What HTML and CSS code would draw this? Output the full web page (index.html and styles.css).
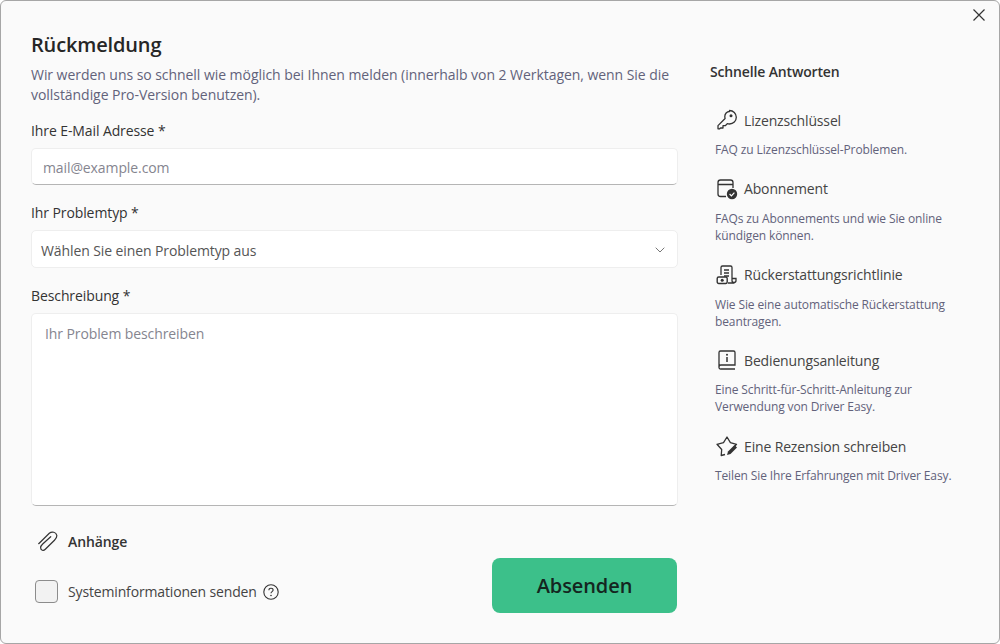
FILE: index.html
```html
<!DOCTYPE html>
<html lang="de">
<head>
    <meta charset="UTF-8">
    <meta name="viewport" content="width=device-width, initial-scale=1.0">
    <title>Rückmeldung</title>
    <link rel="stylesheet" href="styles.css">
</head>
<body>
    <div class="window">
        <button class="close" aria-label="Schließen">
            <svg width="14" height="14" viewBox="0 0 14 14"><path d="M1.5 1.5l11 11M12.5 1.5l-11 11" fill="none" stroke="#333" stroke-width="1.2"/></svg>
        </button>

        <div class="form">
            <h1>Rückmeldung</h1>
            <p class="intro">Wir werden uns so schnell wie möglich bei Ihnen melden (innerhalb von 2 Werktagen, wenn Sie die vollständige Pro-Version benutzen).</p>

            <label class="field-label" for="email">Ihre E-Mail Adresse *</label>
            <input class="email" type="text" id="email" placeholder="mail@example.com">

            <label class="field-label" for="type">Ihr Problemtyp *</label>
            <div class="select" id="type">
                <span>Wählen Sie einen Problemtyp aus</span>
                <svg width="10" height="6" viewBox="0 0 10 6"><path d="M.7.7L5 5l4.3-4.3" fill="none" stroke="#777" stroke-width="1"/></svg>
            </div>

            <label class="field-label" for="desc">Beschreibung *</label>
            <textarea class="desc" id="desc" placeholder="Ihr Problem beschreiben"></textarea>

            <div class="bottom">
                <div class="bottom-left">
                    <div class="attach">
                        <svg width="22" height="22" viewBox="0 0 22 22"><path d="M1.7 12.700L12.300 2.300C15 0 19 1.300 19.700 4C20.300 6 19 7.300 17.700 9L8.300 18.300C6.300 20.300 3.700 19.300 3.700 17C3.300 15.300 4.300 14.300 5.700 13L13.700 5.700" fill="none" stroke="#333" stroke-width="1.200" stroke-linecap="round"/></svg>
                        <span>Anhänge</span>
                    </div>
                    <div class="sysinfo">
                        <span class="checkbox"></span>
                        <span>Systeminformationen senden</span>
                        <svg width="16" height="16" viewBox="0 0 16 16"><circle cx="8" cy="8" r="7.200" fill="none" stroke="#333" stroke-width="1.100"/><path d="M5.900 6.200c0-1.200 1-1.900 2.100-1.900s2.100.7 2.100 1.800c0 1.500-2.100 1.500-2.100 3.100" fill="none" stroke="#333" stroke-width="1.100"/><circle cx="8" cy="11.500" r=".8" fill="#333"/></svg>
                    </div>
                </div>
                <button class="submit">Absenden</button>
            </div>
        </div>

        <div class="side">
            <h2>Schnelle Antworten</h2>

            <div class="item">
                <div class="item-head">
                    <svg width="22" height="22" viewBox="0 0 22 22"><path d="M13.500 1.500a6.800 6.800 0 0 1 6.800 6.800c0 3.700-3 6.700-6.800 6.700-.8 0-1.500-.1-2.200-.4l-2 2.100H7v2.300H4.500l-.8.8H2v-3.200l7.100-7.100a6.500 6.500 0 0 1-.3-1.900c0-2.700 2-5.100 4.700-5.100z" fill="none" stroke="#333" stroke-width="1.300" stroke-linejoin="round"/><circle cx="15" cy="6.800" r="1.500" fill="#333"/></svg>
                    <span>Lizenzschlüssel</span>
                </div>
                <p>FAQ zu Lizenzschlüssel-Problemen.</p>
            </div>

            <div class="item">
                <div class="item-head">
                    <svg width="22" height="22" viewBox="0 0 22 22"><path d="M10 18.500H4.500A2.500 2.500 0 0 1 2 16V4.500A2.500 2.500 0 0 1 4.500 2h10A2.500 2.500 0 0 1 17 4.500V10M2 6.500h15" fill="none" stroke="#333" stroke-width="1.300"/><circle cx="16" cy="16" r="5.200" fill="#333"/><path d="M13.600 16l1.800 1.800 3-3.200" fill="none" stroke="#fff" stroke-width="1.200"/></svg>
                    <span>Abonnement</span>
                </div>
                <p>FAQs zu Abonnements und wie Sie online kündigen können.</p>
            </div>

            <div class="item">
                <div class="item-head">
                    <svg width="22" height="22" viewBox="0 0 22 22"><path d="M5 11V3.500A1.500 1.500 0 0 1 6.500 2h8A1.500 1.500 0 0 1 16 3.500V16.500a2 2 0 0 0 4 0V14.500h-4M12 19h6.500M8 6h5M8 9h5M8 12h5" fill="none" stroke="#333" stroke-width="1.300"/><rect x="1.200" y="13" width="10" height="6.500" rx="1.500" fill="none" stroke="#333" stroke-width="1.400"/><circle cx="6.200" cy="16.200" r="1.500" fill="#333"/></svg>
                    <span>Rückerstattungsrichtlinie</span>
                </div>
                <p>Wie Sie eine automatische Rückerstattung beantragen.</p>
            </div>

            <div class="item">
                <div class="item-head">
                    <svg width="22" height="22" viewBox="0 0 22 22"><path d="M3 17V3.500A1.500 1.500 0 0 1 4.500 2h13A1.500 1.500 0 0 1 19 3.500V16H5a2 2 0 0 0-2 2 1.700 1.700 0 0 0 2 2h14" fill="none" stroke="#333" stroke-width="1.300"/><path d="M11 8v5" stroke="#333" stroke-width="1.500"/><circle cx="11" cy="5.700" r="1" fill="#333"/></svg>
                    <span>Bedienungsanleitung</span>
                </div>
                <p>Eine Schritt-für-Schritt-Anleitung zur Verwendung von Driver Easy.</p>
            </div>

            <div class="item">
                <div class="item-head">
                    <svg width="22" height="22" viewBox="0 0 22 22"><path d="M9 19.500l-3.800 1 .5-6L1 9.300l6.500-1.600L11 2l3.400 5.700 6.100 1.600-2.600 3" fill="none" stroke="#333" stroke-width="1.300" stroke-linejoin="round"/><path d="M11 20l1-3.500 6.500-6.500 2.500 2.500-6.500 6.500z" fill="#333"/></svg>
                    <span>Eine Rezension schreiben</span>
                </div>
                <p>Teilen Sie Ihre Erfahrungen mit Driver Easy.</p>
            </div>
        </div>
    </div>
</body>
</html>
```

FILE: styles.css
```css
* {
    box-sizing: border-box;
}

html, body {
    margin: 0;
    height: 100%;
}

body {
    font-family: "Open Sans", "Noto Sans", sans-serif;
    background-color: #fff;
}

.window {
    position: relative;
    display: flex;
    height: 644px;
    padding: 30px 0 0 30px;
    background-color: #fafafa;
    border: 1px solid #a6a6a6;
    border-radius: 6px;
}

.close {
    position: absolute;
    top: 7px;
    right: 13px;
    width: 14px;
    height: 14px;
    padding: 0;
    border: none;
    background: none;
    line-height: 0;
}

.form {
    width: 647px;
}

h1 {
    margin: 0;
    font-size: 20px;
    line-height: 27px;
    font-weight: 600;
    letter-spacing: -0.15px;
    color: #262626;
}

.intro {
    margin: 7px 0 -2px;
    font-size: 14px;
    line-height: 20px;
    letter-spacing: -0.05px;
    color: #62627a;
}

.field-label {
    display: block;
    margin: 18px 0 7px;
    font-size: 14px;
    line-height: 20px;
    letter-spacing: -0.1px;
    color: #333;
}

.email,
.select,
.desc {
    display: block;
    width: 100%;
    background-color: #fff;
    border: 1px solid #eee;
    border-radius: 5px;
    font-family: inherit;
    font-size: 14px;
    letter-spacing: -0.1px;
    color: #555;
    outline: none;
}

.email::placeholder,
.desc::placeholder {
    color: #85858f;
    opacity: 1;
}

.email {
    height: 37px;
    padding: 2px 11px 0;
    border-bottom: 1px solid #b5b5b5;
}

.select {
    display: flex;
    align-items: center;
    justify-content: space-between;
    height: 38px;
    padding: 2px 12px 0 9px;
}

.desc {
    height: 193px;
    padding: 10px 13px;
    line-height: 20px;
    resize: none;
    border-bottom: 1px solid #b5b5b5;
}

.bottom {
    display: flex;
    justify-content: space-between;
    margin-top: 24px;
}

.bottom-left {
    display: flex;
    flex-direction: column;
    gap: 27px;
    padding-left: 6px;
}

.attach {
    display: flex;
    align-items: center;
    gap: 9px;
    height: 23px;
    font-size: 14px;
    font-weight: 600;
    letter-spacing: -0.1px;
    color: #333;
}

.sysinfo {
    display: flex;
    align-items: center;
    margin-left: -2px;
    font-size: 14px;
    letter-spacing: -0.15px;
    color: #444;
}

.checkbox {
    width: 23px;
    height: 23px;
    margin-right: 10px;
    background-color: #f2f2f2;
    border: 1px solid #8c8c8c;
    border-radius: 4px;
}

.sysinfo svg {
    margin-left: 6px;
}

.submit {
    width: 185px;
    height: 55px;
    margin-top: 28px;
    margin-right: 1px;
    background-color: #3cc08a;
    border: none;
    border-radius: 8px;
    font-family: inherit;
    font-size: 20px;
    font-weight: 600;
    letter-spacing: -0.1px;
    color: #14261f;
}

.side {
    width: 262px;
    margin-left: 32px;
    padding-top: 31px;
}

h2 {
    margin: 0 0 26px;
    font-size: 14px;
    line-height: 20px;
    font-weight: 600;
    letter-spacing: -0.15px;
    color: #333;
}

.item {
    margin: 0 0 18.8px 5px;
}

.item-head {
    display: flex;
    align-items: center;
    gap: 6px;
    height: 24px;
    padding-left: 1px;
    font-size: 14px;
    letter-spacing: -0.15px;
    color: #444;
}

.item p {
    margin: 9px 0 0;
    font-size: 12px;
    line-height: 17px;
    letter-spacing: -0.12px;
    color: #62627a;
}
```
